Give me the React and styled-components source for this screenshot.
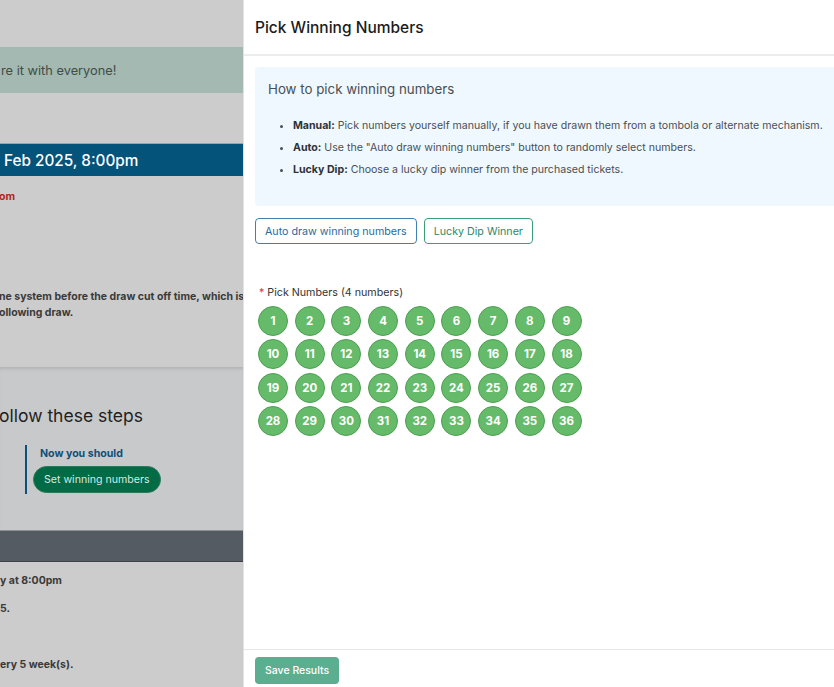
import React from 'react';
import styled, { createGlobalStyle } from 'styled-components';

const GlobalStyle = createGlobalStyle`
  html, body {
    margin: 0;
    padding: 0;
    height: 100%;
    overflow: hidden;
  }
  body {
    font-family: Inter, "Noto Sans", "Liberation Sans", sans-serif;
    background: #cccccc;
  }
  #root {
    height: 100%;
  }
`;

const Screen = styled.div`
  display: flex;
  width: 834px;
  height: 687px;
  overflow: hidden;
`;

// the page behind the drawer, already dimmed
const Backdrop = styled.div`
  width: 243px;
  flex-shrink: 0;
  background: #cccccc;
  display: flex;
  flex-direction: column;
  overflow: hidden;
  white-space: nowrap;
`;

const Banner = styled.div`
  margin-top: 47px;
  height: 46px;
  background: #a3b9b1;
  color: #3f4d47;
  font-size: 12.8px;
  display: flex;
  align-items: center;
  padding-left: 1px;
`;

const DateBar = styled.div`
  margin-top: 50px;
  height: 32px;
  background: #03537b;
  border-top: 1px solid #9aa5ab;
  color: #ffffff;
  font-size: 15.3px;
  font-weight: 500;
  display: flex;
  align-items: center;
  padding-left: 4px;
`;

const PageText = styled.div`
  font-size: 10.5px;
  font-weight: 700;
  color: ${p => p.$red ? '#b42222' : '#3a3a3a'};
  margin-top: ${p => p.$top || 0}px;
  margin-left: ${p => p.$left || 0}px;
  line-height: 16px;
`;

const StepsCard = styled.div`
  margin-top: 46px;
  height: 163px;
  background: #c8c9ca;
  box-shadow: inset 0 4px 4px -3px rgba(0, 0, 0, 0.16);
  display: flex;
  flex-direction: column;
`;

const StepsTitle = styled.div`
  margin-top: 38px;
  font-size: 17.5px;
  color: #1f1f1f;
  margin-left: -1px;
`;

const NextStep = styled.div`
  margin: 19px 0 0 25px;
  border-left: 2px solid #0d4f7d;
  padding-left: 6px;
  display: flex;
  flex-direction: column;
  align-items: flex-start;
  gap: 6px;
  height: 49px;
`;

const NextLabel = styled.div`
  font-size: 10.6px;
  font-weight: 700;
  color: #0f4f7b;
  padding: 2px 0 0 7px;
`;

const PillButton = styled.button`
  height: 27px;
  padding: 0 10px;
  border: 1px solid #2a7a5a;
  border-radius: 14px;
  background: #006b45;
  color: #d9e8e1;
  font-family: inherit;
  font-size: 10.6px;
`;

const DarkBar = styled.div`
  height: 30px;
  background: #545b62;
  border-top: 1px solid #8d9196;
  border-bottom: 1px solid #3d4247;
`;

// drawer
const Drawer = styled.div`
  width: 640px;
  flex-shrink: 0;
  height: 687px;
  background: #ffffff;
  border-left: 1px solid #e2e2e2;
  display: flex;
  flex-direction: column;
`;

const DrawerHeader = styled.div`
  height: 56px;
  flex-shrink: 0;
  border-bottom: 2px solid #ececec;
  display: flex;
  align-items: center;
  padding-left: 11px;
  box-sizing: border-box;
  font-size: 15.5px;
  font-weight: 500;
  color: #1b1b1b;
`;

const DrawerBody = styled.div`
  flex: 1;
  padding: 11px 11px;
`;

const InfoBox = styled.div`
  background: #f0f8ff;
  border-radius: 4px;
  padding: 14px 13px 16px;
  height: 139px;
  box-sizing: border-box;
`;

const InfoTitle = styled.div`
  font-size: 13.3px;
  color: #474f56;
`;

const InfoList = styled.ul`
  margin: 18px 0 0;
  padding-left: 25px;
  font-size: 10.6px;
  color: #4a4f54;
  white-space: nowrap;
  li {
    line-height: 22px;
  }
  b {
    color: #2f3338;
    font-weight: 700;
  }
`;

const ButtonRow = styled.div`
  display: flex;
  gap: 7px;
  margin-top: 12px;
`;

const OutlineButton = styled.button`
  height: 26px;
  padding: 0 9px;
  background: #ffffff;
  border: 1px solid ${p => p.$tone === 'green' ? '#3d9e7b' : '#3f80b5'};
  color: ${p => p.$tone === 'green' ? '#2b8a65' : '#2b6a9e'};
  border-radius: 4px;
  font-family: inherit;
  font-size: 10.7px;
`;

const FieldLabel = styled.div`
  margin: 42px 0 0 4px;
  font-size: 10.7px;
  color: #333333;
  span {
    color: #d9363e;
    margin-right: 3px;
  }
`;

const BallGrid = styled.div`
  display: grid;
  grid-template-columns: repeat(9, 30px);
  column-gap: 6.7px;
  row-gap: 3.4px;
  margin: 7px 0 0 3px;
`;

const Ball = styled.button`
  width: 30px;
  height: 30px;
  padding: 0;
  border-radius: 50%;
  border: 1px solid #4d9f51;
  background: #66bb6a;
  color: #ffffff;
  font-family: inherit;
  font-size: 11.5px;
  font-weight: 700;
  display: flex;
  align-items: center;
  justify-content: center;
`;

const DrawerFooter = styled.div`
  border-top: 1px solid #e6e6e6;
  padding: 7px 11px 3px;
`;

const SaveButton = styled.button`
  height: 27px;
  padding: 0 10px;
  border: none;
  border-radius: 4px;
  background: #5bae8f;
  color: #ffffff;
  font-family: inherit;
  font-size: 10.5px;
  font-weight: 500;
`;

const numbers = Array.from({ length: 36 }, (_, i) => i + 1);

export default function App() {
  return (
    <Screen>
      <GlobalStyle />
      <Backdrop>
        <Banner>re it with everyone!</Banner>
        <DateBar>Feb 2025, 8:00pm</DateBar>
        <PageText $red $top={13} $left={-1}>om</PageText>
        <PageText $top={84} $left={-1}>ne system before the draw cut off time, which is</PageText>
        <PageText $left={-1}>ollowing draw.</PageText>
        <StepsCard>
          <StepsTitle>ollow these steps</StepsTitle>
          <NextStep>
            <NextLabel>Now you should</NextLabel>
            <PillButton>Set winning numbers</PillButton>
          </NextStep>
        </StepsCard>
        <DarkBar />
        <PageText $top={11}>y at 8:00pm</PageText>
        <PageText $top={12}>5.</PageText>
        <PageText $top={40}>ery 5 week(s).</PageText>
      </Backdrop>

      <Drawer>
        <DrawerHeader>Pick Winning Numbers</DrawerHeader>
        <DrawerBody>
          <InfoBox>
            <InfoTitle>How to pick winning numbers</InfoTitle>
            <InfoList>
              <li><b>Manual:</b> Pick numbers yourself manually, if you have drawn them from a tombola or alternate mechanism.</li>
              <li><b>Auto:</b> Use the "Auto draw winning numbers" button to randomly select numbers.</li>
              <li><b>Lucky Dip:</b> Choose a lucky dip winner from the purchased tickets.</li>
            </InfoList>
          </InfoBox>
          <ButtonRow>
            <OutlineButton>Auto draw winning numbers</OutlineButton>
            <OutlineButton $tone="green">Lucky Dip Winner</OutlineButton>
          </ButtonRow>
          <FieldLabel><span>*</span>Pick Numbers (4 numbers)</FieldLabel>
          <BallGrid>
            {numbers.map(n => (
              <Ball key={n}>{n}</Ball>
            ))}
          </BallGrid>
        </DrawerBody>
        <DrawerFooter>
          <SaveButton>Save Results</SaveButton>
        </DrawerFooter>
      </Drawer>
    </Screen>
  );
}
